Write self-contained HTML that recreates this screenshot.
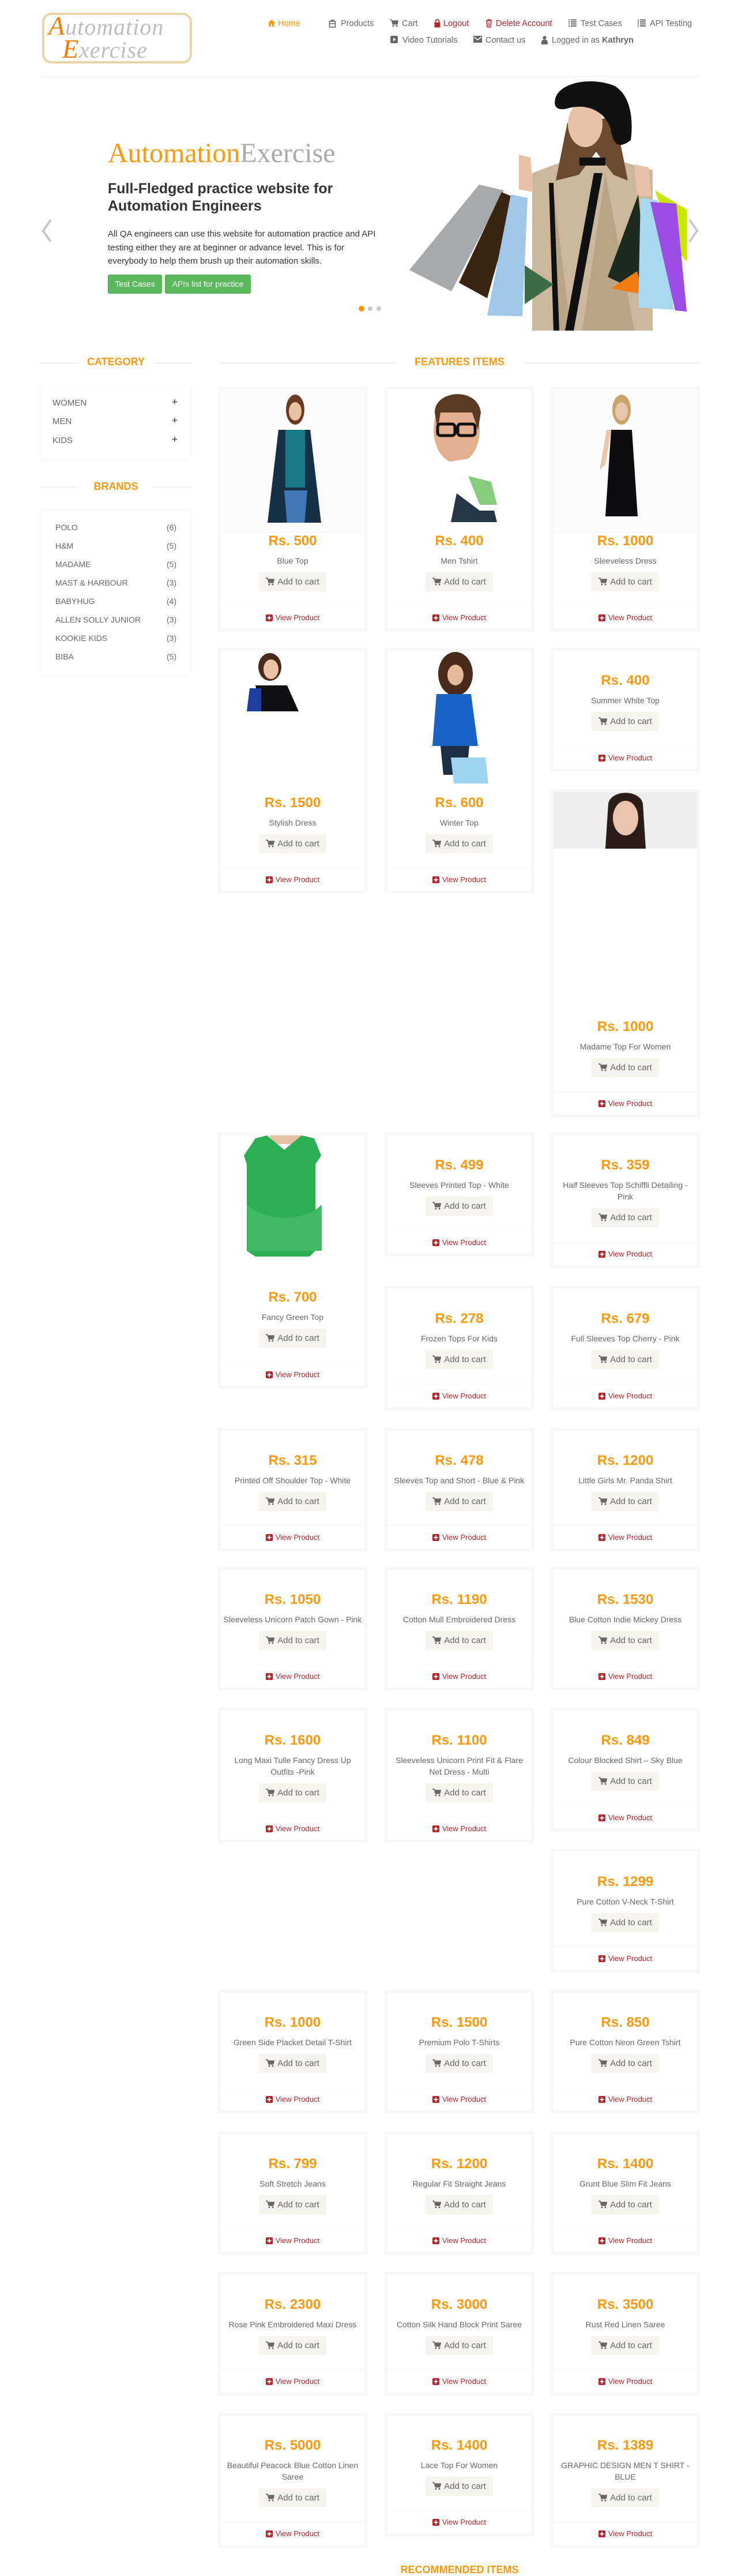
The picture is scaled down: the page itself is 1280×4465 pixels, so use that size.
<!DOCTYPE html>
<html><head><meta charset="utf-8">
<style>
*{box-sizing:border-box;margin:0;padding:0}
body{width:1280px;height:4457px;position:relative;background:#fff;font-family:"Liberation Sans",Arial,sans-serif;color:#696763;overflow:hidden}
.a{position:absolute}
.nav{position:absolute;font-size:14.5px;color:#696763;white-space:nowrap;line-height:18px}
.nav svg{position:absolute;left:-21px;top:1px}
.ttl{position:absolute;color:#FE980F;font-weight:bold;font-size:18px;text-transform:uppercase;text-align:center;line-height:22px}
.ln{position:absolute;height:3px;background:#f4f4f2}
.box{position:absolute;border:1px solid #F7F7F0;background:#fff}
.cat{position:absolute;font-size:15px;color:#696763;line-height:18px}
.brd{position:absolute;font-size:14px;color:#696763;line-height:18px}
.c{position:absolute;width:259px;background:#F7F7F5;padding:5px}
.in{background:#fff;height:100%;position:relative;text-align:center}
.sp{height:38px;position:relative;overflow:hidden}
.c h2{font-size:24px;line-height:28px;color:#FE980F;font-weight:bold}
.c p{font-size:14px;line-height:20px;color:#696763;margin-top:10px;padding:0 2px}
.btn{display:inline-block;margin-top:10px;height:33px;width:117px;background:#F5F5ED;color:#696763;font-size:15px;line-height:33px;text-align:center}
.btn svg{vertical-align:-2px;margin-right:5px}
.vp{position:absolute;left:0;right:0;bottom:0;height:40px;border-top:1px solid #F7F7F0;font-size:13px;line-height:40px;color:#B4262B}
.vp svg{vertical-align:-2px;margin-right:5px}
</style></head><body>

<!-- logo -->
<div class="a" style="left:73px;top:22px;width:260px;height:88px;border:4px solid #e9d6a8;border-radius:16px;background:#fff"></div>
<div class="a" style="left:84px;top:24px;font-family:'Liberation Serif',serif;font-style:italic;font-size:40px;line-height:42px;color:#bdbdbd;letter-spacing:1px"><span style="color:#f57c00;font-size:46px">A</span>utomation</div>
<div class="a" style="left:108px;top:64px;font-family:'Liberation Serif',serif;font-style:italic;font-size:40px;line-height:42px;color:#bdbdbd;letter-spacing:1px"><span style="color:#f57c00;font-size:46px">E</span>xercise</div>

<!-- nav -->
<div class="nav" style="left:482px;top:32px;color:#FE980F"><svg width="14" height="14" viewBox="0 0 14 14" style="left:-18px"><path d="M7 1L0.5 7h2v6h3.5V9h2v4H11V7h2.5z" fill="#FE980F"/></svg>Home</div>
<div class="nav" style="left:591px;top:32px"><svg width="13" height="15" viewBox="0 0 13 15"><rect x="1.5" y="4" width="10" height="10" fill="none" stroke="#696763" stroke-width="1.6"/><path d="M4 4V2h5v2M1.5 8h10" stroke="#696763" stroke-width="1.4" fill="none"/></svg>Products</div>
<div class="nav" style="left:697px;top:32px"><svg width="15" height="14" viewBox="0 0 15 14"><path d="M0 1h3l2 8h8l1.5-6H4" fill="#696763" stroke="#696763" stroke-width="1.2"/><circle cx="6" cy="12" r="1.5" fill="#696763"/><circle cx="12" cy="12" r="1.5" fill="#696763"/></svg>Cart</div>
<div class="nav" style="left:769px;top:32px;color:#B4262B"><svg width="11" height="15" viewBox="0 0 11 15" style="left:-16px"><rect x="0.5" y="6" width="10" height="8.5" fill="#B4262B"/><path d="M2.5 6V4a3 3 0 016 0v2" stroke="#B4262B" stroke-width="1.8" fill="none"/></svg>Logout</div>
<div class="nav" style="left:860px;top:32px;color:#B4262B"><svg width="12" height="15" viewBox="0 0 12 15" style="left:-18px"><path d="M1 3h10M4 3V1h4v2M2 3l1 11h6l1-11" stroke="#B4262B" stroke-width="1.4" fill="none"/><path d="M5 6v6M7 6v6" stroke="#B4262B"/></svg>Delete Account</div>
<div class="nav" style="left:1007px;top:32px"><svg width="14" height="13" viewBox="0 0 14 13"><path d="M0 1.5h2M4 1.5h10M0 5h2M4 5h10M0 8.5h2M4 8.5h10M0 12h2M4 12h10" stroke="#696763" stroke-width="2"/></svg>Test Cases</div>
<div class="nav" style="left:1127px;top:32px"><svg width="14" height="13" viewBox="0 0 14 13"><path d="M0 1.5h2M4 1.5h10M0 5h2M4 5h10M0 8.5h2M4 8.5h10M0 12h2M4 12h10" stroke="#696763" stroke-width="2"/></svg>API Testing</div>
<div class="nav" style="left:698px;top:61px"><svg width="13" height="13" viewBox="0 0 13 13"><rect width="13" height="13" rx="2.5" fill="#696763"/><path d="M5 3.5v6l4.5-3z" fill="#fff"/></svg>Video Tutorials</div>
<div class="nav" style="left:842px;top:61px"><svg width="15" height="12" viewBox="0 0 15 12"><rect width="15" height="12" fill="#696763"/><path d="M1 2l6.5 5L14 2" stroke="#fff" stroke-width="1.5" fill="none"/></svg>Contact us</div>
<div class="nav" style="left:957px;top:61px"><svg width="11" height="15" viewBox="0 0 11 15" style="left:-18px"><circle cx="5.5" cy="3.5" r="3.2" fill="#696763"/><path d="M0 15v-4a4 4 0 014-4h3a4 4 0 014 4v4z" fill="#696763"/></svg>Logged in as <b>Kathryn</b></div>

<div class="a" style="left:70px;top:132px;width:1145px;height:1px;background:#f0f0ee"></div>

<!-- slider -->
<div class="a" style="left:187px;top:238px;font-family:'Liberation Serif',serif;font-size:48px;line-height:56px;white-space:nowrap"><span style="color:#FE980F">Automation</span><span style="color:#aaa">Exercise</span></div>
<div class="a" style="left:187px;top:312px;width:470px;font-size:25px;font-weight:bold;line-height:30px;color:#363432">Full-Fledged practice website for Automation Engineers</div>
<div class="a" style="left:187px;top:394px;width:475px;font-size:15px;line-height:23.5px;color:#363432">All QA engineers can use this website for automation practice and API testing either they are at beginner or advance level. This is for everybody to help them brush up their automation skills.</div>
<div class="a" style="left:187px;top:476px;width:94px;height:33px;background:#5cb85c;border:1px solid #4cae4c;border-radius:3px;color:#fff;font-size:14px;line-height:31px;text-align:center">Test Cases</div>
<div class="a" style="left:286px;top:476px;width:149px;height:33px;background:#5cb85c;border:1px solid #4cae4c;border-radius:3px;color:#fff;font-size:14px;line-height:31px;text-align:center">APIs list for practice</div>
<svg class="a" style="left:70px;top:378px" width="22" height="44" viewBox="0 0 22 44"><path d="M18 3L5 22l13 19" stroke="#c9c9c9" stroke-width="4" fill="none"/></svg>
<svg class="a" style="left:1192px;top:378px" width="22" height="44" viewBox="0 0 22 44"><path d="M4 3l13 19L4 41" stroke="#c9c9c9" stroke-width="4" fill="none"/></svg>
<div class="a" style="left:622px;top:530px;width:10px;height:10px;border-radius:50%;background:#FE980F"></div>
<div class="a" style="left:638px;top:531px;width:8px;height:8px;border-radius:50%;background:#c9c9c9"></div>
<div class="a" style="left:653px;top:531px;width:8px;height:8px;border-radius:50%;background:#c9c9c9"></div>

<svg class="a" style="left:0;top:0" width="1280" height="600" viewBox="0 0 1280 600">
<path d="M923 300L990 275h70l72 20v278H923z" fill="#cbb89c"/>
<path d="M960 330l30 243h-25zM1050 300l-40 273h90z" fill="#b9a585"/>
<path d="M984 213l-20 100 40 -10 30-40 30 40 25 10-22-110z" fill="#6b4a30"/>
<ellipse cx="1015" cy="215" rx="30" ry="40" fill="#e8c2a6"/>
<path d="M964 168c10-25 60-35 100-20 30 15 35 60 30 95-20 15-30 10-35-20-10-30-40-45-75-35-20 5-25-5-20-20z" fill="#111"/>
<path d="M1005 273h45v14h-45z" fill="#111"/>
<path d="M952 317l8 256h10l-10-256zM1030 300l-50 273h15l50-273z" fill="#111"/>
<path d="M900 268l20 5 5 60-25-5z" fill="#e8c2a6"/>
<path d="M1100 285l25 5 5 50-25 0z" fill="#e8c2a6"/>
<path d="M710 468L831 320l43 10-91 175z" fill="#a6a8aa"/>
<path d="M796 490l74-157 24 10-49 174z" fill="#3a2412"/>
<path d="M845 547l41-210 29 6-9 205z" fill="#9fc7e8"/>
<path d="M910 460l50 33-50 34z" fill="#3c6b48"/>
<path d="M1054 480l53-143 17 176z" fill="#1d2a20"/>
<path d="M1060 500l45-30 10 40z" fill="#f07c12"/>
<path d="M1111 343l29 4 29 190-62-4z" fill="#a8d8f0"/>
<path d="M1136 330l55 33v90l-22-23z" fill="#c9e800"/>
<path d="M1128 350l45 3 18 187-20-2z" fill="#9a4de0"/>
</svg>

<!-- sidebar -->
<div class="ln" style="left:70px;top:628px;width:66px"></div><div class="ln" style="left:266px;top:628px;width:67px"></div>
<div class="ttl" style="left:136px;top:616px;width:130px">Category</div>
<div class="box" style="left:70px;top:669px;width:263px;height:130px"></div>
<div class="cat" style="left:91px;top:690px">WOMEN</div><div class="cat" style="left:91px;top:722px">MEN</div><div class="cat" style="left:91px;top:755px">KIDS</div>
<div class="cat" style="left:298px;top:688px;font-weight:bold;font-size:17px">+</div><div class="cat" style="left:298px;top:720px;font-weight:bold;font-size:17px">+</div><div class="cat" style="left:298px;top:753px;font-weight:bold;font-size:17px">+</div>
<div class="ln" style="left:70px;top:843px;width:66px"></div><div class="ln" style="left:266px;top:843px;width:67px"></div>
<div class="ttl" style="left:136px;top:832px;width:130px">Brands</div>
<div class="box" style="left:70px;top:883px;width:263px;height:290px"></div>
<div class="brd" style="left:96px;top:905px">POLO</div><div class="brd" style="left:96px;top:937px">H&amp;M</div><div class="brd" style="left:96px;top:969px">MADAME</div><div class="brd" style="left:96px;top:1001px">MAST &amp; HARBOUR</div><div class="brd" style="left:96px;top:1033px">BABYHUG</div><div class="brd" style="left:96px;top:1065px">ALLEN SOLLY JUNIOR</div><div class="brd" style="left:96px;top:1097px">KOOKIE KIDS</div><div class="brd" style="left:96px;top:1129px">BIBA</div>
<div class="brd" style="left:289px;top:905px">(6)</div><div class="brd" style="left:289px;top:937px">(5)</div><div class="brd" style="left:289px;top:969px">(5)</div><div class="brd" style="left:289px;top:1001px">(3)</div><div class="brd" style="left:289px;top:1033px">(4)</div><div class="brd" style="left:289px;top:1065px">(3)</div><div class="brd" style="left:289px;top:1097px">(3)</div><div class="brd" style="left:289px;top:1129px">(5)</div>

<!-- features title -->
<div class="ln" style="left:380px;top:628px;width:307px"></div><div class="ln" style="left:907px;top:628px;width:308px"></div>
<div class="ttl" style="left:687px;top:616px;width:220px">Features Items</div>

<svg width="0" height="0" style="position:absolute"><defs>
<symbol id="cart" viewBox="0 0 15 14"><path d="M0 1h3l2 8h8l1.5-6H4z" fill="#696763" stroke="#696763" stroke-width="1.2"/><circle cx="6" cy="12" r="1.5" fill="#696763"/><circle cx="12" cy="12" r="1.5" fill="#696763"/></symbol>
<symbol id="plus" viewBox="0 0 12 12"><rect width="12" height="12" rx="2" fill="#B4262B"/><path d="M6 2.5v7M2.5 6h7" stroke="#fff" stroke-width="2"/></symbol>
</defs></svg>

<!-- Row 1 -->
<div class="c" style="left:378px;top:670px;height:425px"><div class="in"><div class="sp" style="height:249px;background:#fbfbfb"><svg width="249" height="231" viewBox="0 0 249 231"><ellipse cx="129" cy="35" rx="16" ry="26" fill="#6b3a22"/><ellipse cx="129" cy="38" rx="11" ry="16" fill="#e9c1a3"/><path d="M100 70l55 0 20 170H80z" fill="#163046"/><path d="M112 70h34v100h-34z" fill="#167a86"/><path d="M110 175h40l-5 60h-30z" fill="#3f78b4"/></svg></div><h2>Rs. 500</h2><p>Blue Top</p><span class="btn"><svg width="15" height="14"><use href="#cart"/></svg>Add to cart</span><div class="vp"><svg width="12" height="12"><use href="#plus"/></svg>View Product</div></div></div>
<div class="c" style="left:667px;top:670px;height:425px"><div class="in"><div class="sp" style="height:249px"><svg width="249" height="231" viewBox="0 0 249 231"><ellipse cx="120" cy="70" rx="40" ry="58" fill="#e2b08f"/><path d="M82 40c0-40 75-45 80 0l-5 30-10-30h-55l-5 30z" fill="#5a3a22"/><rect x="87" y="60" width="30" height="20" rx="5" fill="none" stroke="#111" stroke-width="5"/><rect x="122" y="60" width="30" height="20" rx="5" fill="none" stroke="#111" stroke-width="5"/><path d="M80 130l60-10 55 40 5 70H85z" fill="#fff"/><path d="M140 150l40 10 10 40-30 0z" fill="#86cb7e"/><path d="M120 180l40 30 25 0 5 20h-80z" fill="#263648"/></svg></div><h2>Rs. 400</h2><p>Men Tshirt</p><span class="btn"><svg width="15" height="14"><use href="#cart"/></svg>Add to cart</span><div class="vp"><svg width="12" height="12"><use href="#plus"/></svg>View Product</div></div></div>
<div class="c" style="left:955px;top:670px;height:425px"><div class="in"><div class="sp" style="height:249px;background:#fbfbfb"><svg width="249" height="231" viewBox="0 0 249 231"><ellipse cx="118" cy="35" rx="16" ry="26" fill="#c9a46a"/><ellipse cx="118" cy="38" rx="11" ry="16" fill="#eac7ac"/><path d="M100 70h36l10 150h-56z" fill="#0d0d0f"/><path d="M92 70l8 0-10 60-10 10z" fill="#eac7ac"/></svg></div><h2>Rs. 1000</h2><p>Sleeveless Dress</p><span class="btn"><svg width="15" height="14"><use href="#cart"/></svg>Add to cart</span><div class="vp"><svg width="12" height="12"><use href="#plus"/></svg>View Product</div></div></div>

<!-- Row 2 -->
<div class="c" style="left:378px;top:1123px;height:426px"><div class="in"><div class="sp" style="height:250px"><svg width="249" height="110" viewBox="0 0 249 110"><ellipse cx="85" cy="28" rx="20" ry="24" fill="#4a2a1a"/><ellipse cx="87" cy="32" rx="13" ry="17" fill="#eac2a5"/><path d="M60 60l55 0 20 45H70z" fill="#0f0f12"/><path d="M50 65l20 0 0 40H45z" fill="#1c3f9e"/></svg></div><h2>Rs. 1500</h2><p>Stylish Dress</p><span class="btn"><svg width="15" height="14"><use href="#cart"/></svg>Add to cart</span><div class="vp"><svg width="12" height="12"><use href="#plus"/></svg>View Product</div></div></div>
<div class="c" style="left:667px;top:1123px;height:426px"><div class="in"><div class="sp" style="height:250px"><svg width="249" height="235" viewBox="0 0 249 235"><ellipse cx="118" cy="40" rx="30" ry="38" fill="#4a2a1a"/><ellipse cx="118" cy="42" rx="14" ry="18" fill="#e6b998"/><path d="M85 75h60l12 90H78z" fill="#1863c4"/><path d="M92 165h50l-5 50h-40z" fill="#1f2e45"/><path d="M110 185h60l5 45h-60z" fill="#9fd4f0"/></svg></div><h2>Rs. 600</h2><p>Winter Top</p><span class="btn"><svg width="15" height="14"><use href="#cart"/></svg>Add to cart</span><div class="vp"><svg width="12" height="12"><use href="#plus"/></svg>View Product</div></div></div>
<div class="c" style="left:955px;top:1123px;height:215px"><div class="in"><div class="sp"></div><h2>Rs. 400</h2><p>Summer White Top</p><span class="btn"><svg width="15" height="14"><use href="#cart"/></svg>Add to cart</span><div class="vp"><svg width="12" height="12"><use href="#plus"/></svg>View Product</div></div></div>
<div class="c" style="left:955px;top:1368px;height:569px"><div class="in"><div class="sp" style="height:393px"><svg width="249" height="100" viewBox="0 0 249 100" style="display:block"><rect width="249" height="98" fill="#ededee"/><path d="M95 20c5-25 55-25 60 0l5 78h-70z" fill="#2a1d18"/><ellipse cx="125" cy="45" rx="22" ry="30" fill="#eac3ad"/></svg></div><h2>Rs. 1000</h2><p>Madame Top For Women</p><span class="btn"><svg width="15" height="14"><use href="#cart"/></svg>Add to cart</span><div class="vp"><svg width="12" height="12"><use href="#plus"/></svg>View Product</div></div></div>

<!-- Row 3 -->
<div class="c" style="left:378px;top:1963px;height:444px"><div class="in"><div class="sp" style="height:267px"><svg width="249" height="210" viewBox="0 0 249 210"><path d="M85 0h55l-5 15h-45z" fill="#e6c1a6"/><path d="M60 5l20-5 30 25 30-25 22 5 12 30-10 15v150l-10 10H60l-15-10V50l-5-15z" fill="#2cae52"/><path d="M45 120c30 30 100 30 130 0v80H45z" fill="#3fba62"/></svg></div><h2>Rs. 700</h2><p>Fancy Green Top</p><span class="btn"><svg width="15" height="14"><use href="#cart"/></svg>Add to cart</span><div class="vp"><svg width="12" height="12"><use href="#plus"/></svg>View Product</div></div></div>
<div class="c" style="left:667px;top:1963px;height:215px"><div class="in"><div class="sp"></div><h2>Rs. 499</h2><p>Sleeves Printed Top - White</p><span class="btn"><svg width="15" height="14"><use href="#cart"/></svg>Add to cart</span><div class="vp"><svg width="12" height="12"><use href="#plus"/></svg>View Product</div></div></div>
<div class="c" style="left:955px;top:1963px;height:235px"><div class="in"><div class="sp"></div><h2>Rs. 359</h2><p>Half Sleeves Top Schiffli Detailing - Pink</p><span class="btn"><svg width="15" height="14"><use href="#cart"/></svg>Add to cart</span><div class="vp"><svg width="12" height="12"><use href="#plus"/></svg>View Product</div></div></div>
<div class="c" style="left:667px;top:2229px;height:215px"><div class="in"><div class="sp"></div><h2>Rs. 278</h2><p>Frozen Tops For Kids</p><span class="btn"><svg width="15" height="14"><use href="#cart"/></svg>Add to cart</span><div class="vp"><svg width="12" height="12"><use href="#plus"/></svg>View Product</div></div></div>
<div class="c" style="left:955px;top:2229px;height:215px"><div class="in"><div class="sp"></div><h2>Rs. 679</h2><p>Full Sleeves Top Cherry - Pink</p><span class="btn"><svg width="15" height="14"><use href="#cart"/></svg>Add to cart</span><div class="vp"><svg width="12" height="12"><use href="#plus"/></svg>View Product</div></div></div>

<!-- Row 4 -->
<div class="c" style="left:378px;top:2475px;height:214px"><div class="in"><div class="sp"></div><h2>Rs. 315</h2><p>Printed Off Shoulder Top - White</p><span class="btn"><svg width="15" height="14"><use href="#cart"/></svg>Add to cart</span><div class="vp"><svg width="12" height="12"><use href="#plus"/></svg>View Product</div></div></div>
<div class="c" style="left:667px;top:2475px;height:214px"><div class="in"><div class="sp"></div><h2>Rs. 478</h2><p>Sleeves Top and Short - Blue &amp; Pink</p><span class="btn"><svg width="15" height="14"><use href="#cart"/></svg>Add to cart</span><div class="vp"><svg width="12" height="12"><use href="#plus"/></svg>View Product</div></div></div>
<div class="c" style="left:955px;top:2475px;height:214px"><div class="in"><div class="sp"></div><h2>Rs. 1200</h2><p>Little Girls Mr. Panda Shirt</p><span class="btn"><svg width="15" height="14"><use href="#cart"/></svg>Add to cart</span><div class="vp"><svg width="12" height="12"><use href="#plus"/></svg>View Product</div></div></div>

<!-- Row 5 -->
<div class="c" style="left:378px;top:2716px;height:214px"><div class="in"><div class="sp"></div><h2>Rs. 1050</h2><p>Sleeveless Unicorn Patch Gown - Pink</p><span class="btn"><svg width="15" height="14"><use href="#cart"/></svg>Add to cart</span><div class="vp"><svg width="12" height="12"><use href="#plus"/></svg>View Product</div></div></div>
<div class="c" style="left:667px;top:2716px;height:214px"><div class="in"><div class="sp"></div><h2>Rs. 1190</h2><p>Cotton Mull Embroidered Dress</p><span class="btn"><svg width="15" height="14"><use href="#cart"/></svg>Add to cart</span><div class="vp"><svg width="12" height="12"><use href="#plus"/></svg>View Product</div></div></div>
<div class="c" style="left:955px;top:2716px;height:214px"><div class="in"><div class="sp"></div><h2>Rs. 1530</h2><p>Blue Cotton Indie Mickey Dress</p><span class="btn"><svg width="15" height="14"><use href="#cart"/></svg>Add to cart</span><div class="vp"><svg width="12" height="12"><use href="#plus"/></svg>View Product</div></div></div>

<!-- Row 6 -->
<div class="c" style="left:378px;top:2960px;height:234px"><div class="in"><div class="sp"></div><h2>Rs. 1600</h2><p>Long Maxi Tulle Fancy Dress Up Outfits -Pink</p><span class="btn"><svg width="15" height="14"><use href="#cart"/></svg>Add to cart</span><div class="vp"><svg width="12" height="12"><use href="#plus"/></svg>View Product</div></div></div>
<div class="c" style="left:667px;top:2960px;height:234px"><div class="in"><div class="sp"></div><h2>Rs. 1100</h2><p>Sleeveless Unicorn Print Fit &amp; Flare Net Dress - Multi</p><span class="btn"><svg width="15" height="14"><use href="#cart"/></svg>Add to cart</span><div class="vp"><svg width="12" height="12"><use href="#plus"/></svg>View Product</div></div></div>
<div class="c" style="left:955px;top:2960px;height:215px"><div class="in"><div class="sp"></div><h2>Rs. 849</h2><p>Colour Blocked Shirt – Sky Blue</p><span class="btn"><svg width="15" height="14"><use href="#cart"/></svg>Add to cart</span><div class="vp"><svg width="12" height="12"><use href="#plus"/></svg>View Product</div></div></div>
<div class="c" style="left:955px;top:3205px;height:214px"><div class="in"><div class="sp"></div><h2>Rs. 1299</h2><p>Pure Cotton V-Neck T-Shirt</p><span class="btn"><svg width="15" height="14"><use href="#cart"/></svg>Add to cart</span><div class="vp"><svg width="12" height="12"><use href="#plus"/></svg>View Product</div></div></div>

<!-- Row 7 -->
<div class="c" style="left:378px;top:3449px;height:214px"><div class="in"><div class="sp"></div><h2>Rs. 1000</h2><p>Green Side Placket Detail T-Shirt</p><span class="btn"><svg width="15" height="14"><use href="#cart"/></svg>Add to cart</span><div class="vp"><svg width="12" height="12"><use href="#plus"/></svg>View Product</div></div></div>
<div class="c" style="left:667px;top:3449px;height:214px"><div class="in"><div class="sp"></div><h2>Rs. 1500</h2><p>Premium Polo T-Shirts</p><span class="btn"><svg width="15" height="14"><use href="#cart"/></svg>Add to cart</span><div class="vp"><svg width="12" height="12"><use href="#plus"/></svg>View Product</div></div></div>
<div class="c" style="left:955px;top:3449px;height:214px"><div class="in"><div class="sp"></div><h2>Rs. 850</h2><p>Pure Cotton Neon Green Tshirt</p><span class="btn"><svg width="15" height="14"><use href="#cart"/></svg>Add to cart</span><div class="vp"><svg width="12" height="12"><use href="#plus"/></svg>View Product</div></div></div>

<!-- Row 8 -->
<div class="c" style="left:378px;top:3694px;height:214px"><div class="in"><div class="sp"></div><h2>Rs. 799</h2><p>Soft Stretch Jeans</p><span class="btn"><svg width="15" height="14"><use href="#cart"/></svg>Add to cart</span><div class="vp"><svg width="12" height="12"><use href="#plus"/></svg>View Product</div></div></div>
<div class="c" style="left:667px;top:3694px;height:214px"><div class="in"><div class="sp"></div><h2>Rs. 1200</h2><p>Regular Fit Straight Jeans</p><span class="btn"><svg width="15" height="14"><use href="#cart"/></svg>Add to cart</span><div class="vp"><svg width="12" height="12"><use href="#plus"/></svg>View Product</div></div></div>
<div class="c" style="left:955px;top:3694px;height:214px"><div class="in"><div class="sp"></div><h2>Rs. 1400</h2><p>Grunt Blue Slim Fit Jeans</p><span class="btn"><svg width="15" height="14"><use href="#cart"/></svg>Add to cart</span><div class="vp"><svg width="12" height="12"><use href="#plus"/></svg>View Product</div></div></div>

<!-- Row 9 -->
<div class="c" style="left:378px;top:3938px;height:214px"><div class="in"><div class="sp"></div><h2>Rs. 2300</h2><p>Rose Pink Embroidered Maxi Dress</p><span class="btn"><svg width="15" height="14"><use href="#cart"/></svg>Add to cart</span><div class="vp"><svg width="12" height="12"><use href="#plus"/></svg>View Product</div></div></div>
<div class="c" style="left:667px;top:3938px;height:214px"><div class="in"><div class="sp"></div><h2>Rs. 3000</h2><p>Cotton Silk Hand Block Print Saree</p><span class="btn"><svg width="15" height="14"><use href="#cart"/></svg>Add to cart</span><div class="vp"><svg width="12" height="12"><use href="#plus"/></svg>View Product</div></div></div>
<div class="c" style="left:955px;top:3938px;height:214px"><div class="in"><div class="sp"></div><h2>Rs. 3500</h2><p>Rust Red Linen Saree</p><span class="btn"><svg width="15" height="14"><use href="#cart"/></svg>Add to cart</span><div class="vp"><svg width="12" height="12"><use href="#plus"/></svg>View Product</div></div></div>

<!-- Row 10 -->
<div class="c" style="left:378px;top:4182px;height:234px"><div class="in"><div class="sp"></div><h2>Rs. 5000</h2><p>Beautiful Peacock Blue Cotton Linen Saree</p><span class="btn"><svg width="15" height="14"><use href="#cart"/></svg>Add to cart</span><div class="vp"><svg width="12" height="12"><use href="#plus"/></svg>View Product</div></div></div>
<div class="c" style="left:667px;top:4182px;height:214px"><div class="in"><div class="sp"></div><h2>Rs. 1400</h2><p>Lace Top For Women</p><span class="btn"><svg width="15" height="14"><use href="#cart"/></svg>Add to cart</span><div class="vp"><svg width="12" height="12"><use href="#plus"/></svg>View Product</div></div></div>
<div class="c" style="left:955px;top:4182px;height:234px"><div class="in"><div class="sp"></div><h2>Rs. 1389</h2><p>GRAPHIC DESIGN MEN T SHIRT - BLUE</p><span class="btn"><svg width="15" height="14"><use href="#cart"/></svg>Add to cart</span><div class="vp"><svg width="12" height="12"><use href="#plus"/></svg>View Product</div></div></div>

<div class="ttl" style="left:637px;top:4443px;width:320px">Recommended Items</div>

</body></html>
